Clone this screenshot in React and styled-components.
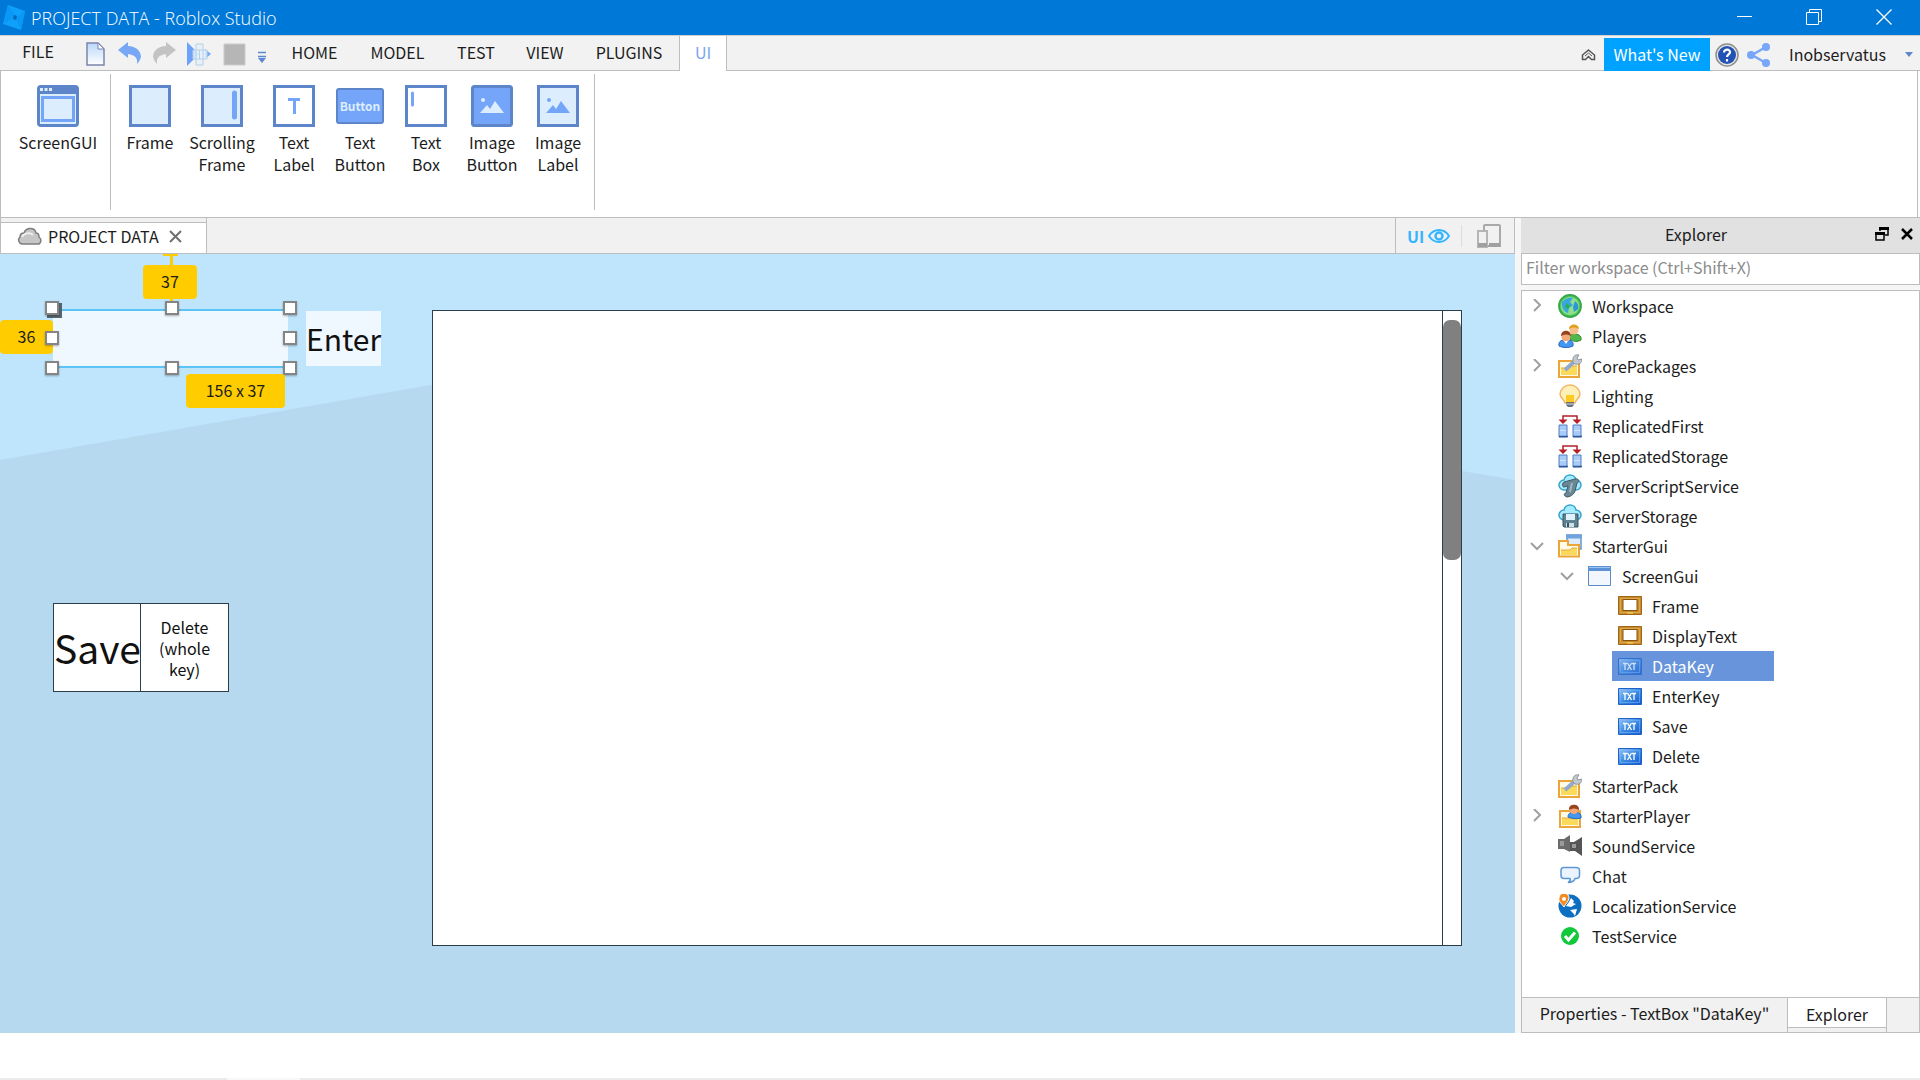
import React from 'react';
import styled, { createGlobalStyle, css } from 'styled-components';

const Global = createGlobalStyle`
  *, *::before, *::after { box-sizing: border-box; }
  body {
    margin: 0;
    background: #fff;
    color: #1c1c1c;
    font-family: 'Noto Sans CJK SC', 'Open Sans', sans-serif;
    font-size: 16px;
    line-height: 22px;
  }
  button, input { font: inherit; color: inherit; border: 0; background: none; padding: 0; margin: 0; }
  ul { list-style: none; margin: 0; padding: 0; }
  svg { display: block; flex: none; }
`;

const line = '#bdbdbd';

const Shell = styled.div`
  min-height: 100vh;
  display: flex;
  flex-direction: column;
`;

/* ---------- title bar ---------- */

const TitleBar = styled.header`
  height: 35px;
  flex: none;
  display: flex;
  align-items: center;
  justify-content: space-between;
  padding: 0 28px 0 3px;
  background: #0078d7;
  color: #fff;
`;

const Title = styled.h1`
  display: flex;
  align-items: center;
  gap: 6px;
  margin: 0;
  font: 300 18px/24px 'Open Sans', sans-serif;
`;

const WindowButtons = styled.div`
  display: flex;
  gap: 54px;
  padding-bottom: 2px;
`;

const IconButton = styled.button`
  display: flex;
  align-items: center;
  justify-content: center;
`;

/* ---------- menu ---------- */

const MenuBar = styled.nav`
  height: 36px;
  flex: none;
  display: flex;
  justify-content: space-between;
  background: #f2f2f2;
  border-top: 1px solid #cfcfcf;
  box-shadow: inset 0 -1px 0 ${line};
`;

const MenuGroup = styled.div`
  display: flex;
  align-items: stretch;
`;

const FileButton = styled.button`
  width: 76px;
  padding-bottom: 6px;
`;

const QuickTools = styled.div`
  display: flex;
  align-items: center;
  gap: 10px;
  padding: 0 7px 0 10px;
`;

const MenuTab = styled.button`
  width: ${(p) => p.$width}px;
  padding-bottom: 3px;
  ${(p) => p.$active && css`
    color: #7aa5f0;
    background: #fff;
    border: solid ${line};
    border-width: 0 1px;
  `}
`;

const Account = styled.div`
  display: flex;
  align-items: center;
  gap: 5px;
  padding: 2px 6px 0 0;
`;

const NewsButton = styled.button`
  align-self: stretch;
  width: 106px;
  margin-left: 3px;
  padding-bottom: 2px;
  background: #00a2ff;
  color: #fff;
`;

const ShareButton = styled(IconButton)`
  margin-left: 3px;
`;

const UserButton = styled.button`
  display: flex;
  align-items: center;
  gap: 18px;
  padding: 0 0 2px 13px;
`;

/* ---------- ribbon ---------- */

const Ribbon = styled.section`
  height: 146px;
  flex: none;
  display: flex;
  padding: 3px 0 7px;
  border: solid ${line};
  border-width: 0 1px;
  margin-right: 2px;
`;

const RibbonGroup = styled.div`
  display: flex;
  align-items: flex-start;
  padding: ${(p) => p.$pad};
  border-right: 1px solid ${line};
`;

const Tool = styled.button`
  width: ${(p) => p.$width}px;
  padding-top: 11px;
  display: flex;
  flex-direction: column;
  align-items: center;
  gap: 4px;
`;

const ToolLabel = styled.span`
  white-space: pre;
  text-align: center;
`;

/* ---------- work area ---------- */

const Work = styled.main`
  flex: 1;
  display: flex;
  gap: 6px;
  border-top: 1px solid ${line};
  background: #f6f6f6;
  margin-bottom: 45px;
`;

const Editor = styled.section`
  flex: 1;
  min-width: 0;
  display: flex;
  flex-direction: column;
`;

const DocBar = styled.div`
  height: 36px;
  flex: none;
  display: flex;
  justify-content: space-between;
  background: #f1f1f1;
  border-bottom: 1px solid ${line};
  border-right: 1px solid ${line};
`;

const DocTab = styled.div`
  display: flex;
  align-items: center;
  width: 207px;
  padding-left: 16px;
  background: #fff;
  border: solid ${line};
  border-width: 0 1px;
  box-shadow: inset 0 4px 0 #f1f1f1, inset 0 5px 0 ${line};
  white-space: nowrap;
  gap: 5px;
`;

const DocClose = styled(IconButton)`
  margin-left: 4px;
`;

const ViewTools = styled.div`
  display: flex;
  align-items: center;
  width: 119px;
  padding-left: 11px;
  border-left: 1px solid ${line};
`;

const UiToggle = styled.button`
  display: flex;
  align-items: center;
  gap: 4px;
  padding-right: 11px;
  border-right: 1px solid #dcdcdc;
  color: #35b5ff;
  font-weight: 700;
`;

const DeviceButton = styled(IconButton)`
  margin-left: 15px;
`;

const Canvas = styled.div`
  position: relative;
  flex: 1;
  overflow: hidden;
  background: #bee5fb;
`;

const Backdrop = styled.svg`
  width: 100%;
  height: 100%;
  position: absolute;
`;

const CanvasItem = styled.div`
  position: absolute;
  left: ${(p) => p.$x}px;
  top: ${(p) => p.$y}px;
  width: ${(p) => p.$w}px;
  height: ${(p) => p.$h}px;
`;

const KeyBox = styled(CanvasItem).attrs({ as: 'input' })`
  background: #eff7ff;
  border: solid #5cc3f5;
  border-width: 2px 0;
`;

const Handle = styled(CanvasItem)`
  background: #fff;
  border: 2px solid #858585;
  box-shadow: 0 1px 2px rgba(0, 0, 0, 0.3);
`;

const Anchor = styled(CanvasItem)`
  border: 4px dashed #56656f;
`;

const Badge = styled(CanvasItem)`
  display: flex;
  align-items: center;
  justify-content: center;
  padding-bottom: 2px;
  border-radius: 4px;
  background: #ffcc00;
`;

const Tick = styled(CanvasItem)`
  background: #ffcc00;
`;

const CanvasButton = styled(CanvasItem).attrs({ as: 'button' })`
  white-space: ${(p) => (p.$wrap ? 'normal' : 'nowrap')};
  background: ${(p) => p.$fill || '#fff'};
  border: ${(p) => (p.$fill ? 'none' : '1px solid #2c3e4a')};
  padding: ${(p) => (p.$wrap ? '2px 12px 0' : '0')};
  font-size: ${(p) => p.$size}px;
  line-height: ${(p) => p.$line}px;
  color: #111;
`;

const ScrollFrame = styled.div`
  position: absolute;
  left: 432px;
  right: 53px;
  top: 56px;
  height: 636px;
  display: flex;
  justify-content: flex-end;
  background: #fff;
  border: 1px solid #2c3e4a;
`;

const ScrollTrack = styled.div`
  width: 19px;
  padding-top: 9px;
  border-left: 1px solid #2c3e4a;
`;

const ScrollThumb = styled.div`
  height: 240px;
  border-radius: 7px;
  background: #808080;
`;

/* ---------- explorer ---------- */

const Panel = styled.aside`
  width: 399px;
  flex: none;
  display: flex;
  flex-direction: column;
`;

const PanelHead = styled.div`
  height: 35px;
  flex: none;
  display: flex;
  align-items: center;
  gap: 4px;
  padding: 0 6px 3px 0;
  background: #e1e1e1;
`;

const PanelTitle = styled.h2`
  flex: 1;
  margin: 0;
  font-size: 16px;
  font-weight: 400;
  text-align: center;
`;

const PanelButtons = styled.div`
  display: flex;
  gap: 11px;
`;

const Filter = styled.input`
  width: 100%;
  height: 32px;
  padding: 0 4px 5px;
  background: #fff;
  border: 1px solid ${line};
  &::placeholder { color: #8c8c8c; opacity: 1; }
`;

const TreeBox = styled.ul`
  flex: 1;
  margin-top: 5px;
  padding: 0;
  background: #fff;
  border: 1px solid ${line};
`;

const Row = styled.li`
  display: flex;
  align-items: center;
  height: 30px;
  padding-left: ${(p) => 5 + p.$depth * 30}px;
`;

const Toggle = styled(IconButton)`
  width: 20px;
  height: 20px;
`;

const RowLabel = styled.span`
  display: flex;
  align-items: center;
  align-self: stretch;
  gap: 10px;
  margin-left: 5px;
  padding: 0 10px 0 6px;
  ${(p) => p.$selected && css`
    width: 162px;
    background: #6794da;
    color: #fff;
  `}
`;

const PanelTabs = styled.div`
  height: 35px;
  flex: none;
  display: flex;
  background: #f1f1f1;
  border: solid ${line};
  border-width: 0 1px 1px;
`;

const PanelTab = styled.button`
  width: ${(p) => p.$width}px;
  padding-bottom: 4px;
  ${(p) => p.$active && css`
    padding-bottom: 2px;
    border: solid ${line};
    border-width: 0 1px;
    background: #fff;
    box-shadow: inset 0 -4px 0 #f1f1f1, inset 0 -5px 0 ${line};
  `}
`;

const StatusEdge = styled.footer`
  height: 2px;
  flex: none;
  background: linear-gradient(90deg, #ebebeb 227px, #f7f7f7 227px 300px, #ebebeb 300px);
`;

/* ---------- drawings ---------- */

const blue = '#5c86c9';
const sky = '#74a5f8';
const pale = '#dcedfe';

const Svg = ({ w = 24, h = 24, children, ...rest }) => (
  <svg width={w} height={h} viewBox={`0 0 ${w} ${h}`} fill="none" aria-hidden="true" {...rest}>{children}</svg>
);

const Box = ({ fill = pale, children }) => (
  <Svg w={42} h={42}><path d="M1.5 1.5h39v39h-39z" fill={fill} stroke={blue} strokeWidth="3" />{children}</Svg>
);

const Mountains = ({ fill }) => (
  <g fill={fill}><circle cx="12" cy="15" r="2" /><path d="M9 28l7-8 3 4 5-8 9 12z" /></g>
);

const toolIcons = {
  screen: (
    <Svg w={42} h={42}>
      <rect width="42" height="42" rx="4" fill={blue} />
      <path d="M3 9h36v30H3z" fill={pale} />
      <path d="M5.500 12.500h31v23h-31z" stroke={sky} strokeWidth="3" fill={pale} />
      <path d="M3 3h3v3H3zM7.500 3h3v3h-3zM12 3h3v3h-3z" fill={pale} />
    </Svg>
  ),
  frame: <Box />,
  scrolling: <Box><path d="M33.500 8v24" stroke={sky} strokeWidth="5" strokeLinecap="round" /></Box>,
  label: <Box fill="#fff"><path d="M15 14.500h12M21.500 14v15" stroke={sky} strokeWidth="3" /></Box>,
  box: <Box fill="#fff"><path d="M7.500 8v12" stroke={sky} strokeWidth="3" strokeLinecap="round" /></Box>,
  imageButton: (
    <Svg w={42} h={42}>
      <rect x="1.500" y="1.500" width="39" height="39" rx="2" fill={sky} stroke={blue} strokeWidth="3" />
      <Mountains fill={pale} />
    </Svg>
  ),
  imageLabel: <Box><Mountains fill={sky} /></Box>,
};

const ButtonIcon = styled.span`
  display: flex;
  align-items: center;
  justify-content: center;
  width: 48px;
  height: 36px;
  margin: 3px 0;
  border: 2px solid ${blue};
  border-radius: 3px;
  background: ${sky};
  color: ${pale};
  font: 700 12px/16px 'Noto Sans CJK SC', sans-serif;
`;

const Folder = ({ x = 0 }) => (
  <g>
    <path d={`M${1 + x} 7h20v16h-20z`} fill="#fffbe6" stroke="#eba538" strokeWidth="2" />
    <path d={`M${3 + x} 14h9l2-2h5v9h-16z`} fill="#fbd95a" />
    <path d={`M${3 + x} 14h9l2-2h5`} stroke="#e9a93f" />
  </g>
);

const Wrench = () => (
  <g>
    <path d="M7 16l10-9" stroke="#8fa9cf" strokeWidth="4" />
    <path d="M15 8c-1-5 2-8 6-7l-2 3 1 2 4-1c0 4-3 6-7 5z" fill="#c3c8ce" stroke="#8e949c" />
  </g>
);

const Replicated = () => (
  <Svg>
    <path d="M5 6V2h14v4" stroke="#b3202a" strokeWidth="1.500" />
    <path d="M0.500 5.500h9L5 10zM14.500 5.500h9L19 10z" fill="#b3202a" />
    <path d="M1 11h8v12H1zM15 11h8v12h-8z" fill="#a9cbf7" stroke="#537fc4" />
    <path d="M2.500 16.500h5M16.500 16.500h5" stroke="#fff" strokeDasharray="1 1" />
    <path d="M1 22.500h9M15 22.500h9" stroke="#33589a" strokeWidth="1.500" />
  </Svg>
);

const Cloud = () => (
  <path d="M12 1a6 6 0 0 1 6 5 5 5 0 0 1 0 10H6A5 5 0 0 1 6 6a6 6 0 0 1 6-5z" fill="#a6ebff" stroke="#35a5cb" strokeWidth="1.500" />
);

const Gold = () => (
  <Svg>
    <path d="M.500 2.500h23v18H.500z" fill="#c98a2b" stroke="#9f6518" />
    <path d="M2.500 4.500h19v14h-19z" stroke="#dda84c" />
    <path d="M5 5.500h14v11H5z" fill="#fff" stroke="#8a5510" />
    <path d="M9 19h6" stroke="#f7e06a" />
  </Svg>
);

const Txt = ({ selected }) => (
  <Svg opacity={selected ? 0.7 : 1}>
    <defs>
      <linearGradient id="txt" x1="0" y1="0" x2="1" y2="1">
        <stop stopColor="#9cc8f8" /><stop offset=".5" stopColor="#3b8be4" /><stop offset="1" stopColor="#1258cf" />
      </linearGradient>
    </defs>
    <path d="M.500 4.500h23v16H.500z" fill="url(#txt)" stroke="#1f62c8" />
    <path d="M2.500 6.500h19v12h-19z" stroke="#7db4f4" opacity=".6" />
    <path d="M5 9.500h4M7 9.500V16M9.500 9l4 7M13.500 9l-4 7M14 9.500h4M16 9.500V16" stroke="#fff" strokeWidth="1.300" />
  </Svg>
);

const treeIcons = {
  globe: (
    <Svg>
      <circle cx="12" cy="12" r="11" fill="#58c865" stroke="#37a848" strokeWidth="1.800" />
      <circle cx="12" cy="12" r="9" fill="#8fe08b" />
      <path d="M4 8c3-4 8-5 11-4l-3 4 3 3-4 3-1 5c-4-1-7-6-6-11z" fill="#37a7dd" />
      <path d="M17 7c3 2 4 5 3 8l-4 3-1-5z" fill="#2f95d8" />
      <path d="M9 9l3 3-2 3-3-2z" fill="#2cae55" />
    </Svg>
  ),
  players: (
    <Svg>
      <path d="M12 15c-1-5 3-5 5-5s7 1 6 6c-3 2-8 2-11-1z" fill="#51b84b" stroke="#2d8a34" />
      <circle cx="16" cy="6" r="4.500" fill="#f7bd86" /><path d="M11 5c0-6 10-6 10 0-4-2-7-2-10 0z" fill="#e3a01d" />
      <path d="M1 22c-1-6 4-6 7-6s8 0 7 6c-4 2-10 2-14 0z" fill="#4596ef" stroke="#2468c2" />
      <circle cx="8" cy="13" r="4.500" fill="#f3a97a" /><path d="M3 12c0-7 10-7 10 0-4-2-7-2-10 0z" fill="#96451d" />
      <path d="M6 17l2 3 2-3z" fill="#fff" />
    </Svg>
  ),
  package: <Svg><Folder /><Wrench /></Svg>,
  bulb: (
    <Svg>
      <path d="M12 1a10 10 0 0 1 10 9c0 4-4 5-5 9H7c-1-4-5-5-5-9a10 10 0 0 1 10-9z" fill="#fff0b8" stroke="#f3b562" strokeWidth="1.500" />
      <path d="M8 11h8v7H8z" fill="#fdcb22" /><path d="M8 18h8v3l-2 2h-4l-2-2z" fill="#69717b" />
      <path d="M8 20h8" stroke="#d8dde2" />
    </Svg>
  ),
  replicated: <Replicated />,
  script: (
    <Svg><Cloud /><path d="M6 8l11-3c4-1 5 3 2 4l-2 8c-1 4-6 6-8 6-4-1-3-4-1-4l2-7-4 1c-2 0-2-4 0-5z" fill="#6a8796" stroke="#3e5a69" /><path d="M14 9l-2 9" stroke="#9fb8c3" strokeWidth="2" /></Svg>
  ),
  storage: (
    <Svg><Cloud /><path d="M5 10h15v13H6l-1-1z" fill="#5f8292" stroke="#365361" /><path d="M8 10h9v6H8z" fill="#dff2f9" /><path d="M8 19h8v4H8z" fill="#cfe1e8" /><path d="M10 19v4" stroke="#365361" strokeWidth="2" /></Svg>
  ),
  starterGui: (
    <Svg>
      <path d="M9 1h14v14H9z" fill="#dcecfb" stroke="#6596cf" strokeWidth="1.500" /><path d="M8 .500h16v4H8z" fill="#6fa3dd" />
      <path d="M1 7h9v4h11v11.500H1z" fill="#fffbe6" stroke="#eba538" strokeWidth="2" />
      <path d="M3 16h9l2-2h5v7H3z" fill="#fbd95a" /><path d="M3 16h9l2-2h5" stroke="#e9a93f" />
    </Svg>
  ),
  window: (
    <Svg><path d="M.500 3v18.500h22V3z" fill="#f2f7fe" stroke="#5a8bc6" /><path d="M0 2h23v5H0z" fill="#5b93d6" /><path d="M1 3.500h21" stroke="#9fc4ee" /></Svg>
  ),
  gold: <Gold />,
  txt: <Txt />,
  txtSelected: <Txt selected />,
  starterPlayer: (
    <Svg>
      <Folder x={1} />
      <path d="M10 13c0-4 3-5 6-5s8 1 7 6c-4 1-9 1-13-1z" fill="#4596ef" stroke="#2468c2" />
      <circle cx="16" cy="6" r="4" fill="#f3a97a" /><path d="M11 6c-1-7 11-7 10 0-3-2-6-2-10 0z" fill="#96451d" />
    </Svg>
  ),
  sound: (
    <Svg>
      <path d="M0 5h6l6-4v17l-6-3H0z" fill="#6b6b6b" /><path d="M12 8h4l8-5v19l-7-5h-5z" fill="#555" />
      <path d="M2 7h4v5H2zM14 10h4v4h-4z" fill="#9a9a9a" />
    </Svg>
  ),
  chat: (
    <Svg><path d="M6 3.500h12c2 0 3.500 1 3.500 3v5c0 2-1.500 3-3.500 3h-1c0 2-3 4-7 4 2-1 3-2 2-4H6c-2 0-3-1-3-3v-5c0-2 1-3 3-3z" fill="#eaf3fe" stroke="#5f97d3" strokeWidth="1.500" /></Svg>
  ),
  localization: (
    <Svg>
      <circle cx="12" cy="12" r="11.500" fill="#0d6fc1" />
      <path d="M8 12l3-4 2-4 3 3-1 2 3 1-5 3zM12 16l7-1-2 7-2-3z" fill="#fff" />
      <path d="M6 13C3 9 0 7 1 4a5 5 0 0 1 10 0c0 3-3 5-5 9z" fill="#f58a1f" stroke="#fff" /><circle cx="6" cy="5" r="2" fill="#fff" />
    </Svg>
  ),
  test: (
    <Svg><circle cx="12" cy="12" r="9" fill="#11c93a" /><path d="M7 12l3.500 4L17 8.500" stroke="#fff" strokeWidth="3" /></Svg>
  ),
};

const Chevron = ({ open }) => (
  <Svg w={14} h={14}>
    <path d={open ? 'M1 4l6 6 6-6' : 'M4 0l6 6-6 6'} stroke="#a0a0a0" strokeWidth="2" />
  </Svg>
);

/* ---------- data ---------- */

const tabs = [['HOME', 79], ['MODEL', 87], ['TEST', 70], ['VIEW', 68], ['PLUGINS', 100], ['UI', 48, true]];

const tools = [
  ['Frame', toolIcons.frame, 72],
  ['Scrolling\nFrame', toolIcons.scrolling, 72],
  ['Text\nLabel', toolIcons.label, 72],
  ['Text\nButton', <ButtonIcon>Button</ButtonIcon>, 60],
  ['Text\nBox', toolIcons.box, 72],
  ['Image\nButton', toolIcons.imageButton, 60],
  ['Image\nLabel', toolIcons.imageLabel, 72],
];

const rows = [
  ['Workspace', 'globe', 0, 'closed'],
  ['Players', 'players', 0],
  ['CorePackages', 'package', 0, 'closed'],
  ['Lighting', 'bulb', 0],
  ['ReplicatedFirst', 'replicated', 0],
  ['ReplicatedStorage', 'replicated', 0],
  ['ServerScriptService', 'script', 0],
  ['ServerStorage', 'storage', 0],
  ['StarterGui', 'starterGui', 0, 'open'],
  ['ScreenGui', 'window', 1, 'open'],
  ['Frame', 'gold', 2],
  ['DisplayText', 'gold', 2],
  ['DataKey', 'txtSelected', 2],
  ['EnterKey', 'txt', 2],
  ['Save', 'txt', 2],
  ['Delete', 'txt', 2],
  ['StarterPack', 'package', 0],
  ['StarterPlayer', 'starterPlayer', 0, 'closed'],
  ['SoundService', 'sound', 0],
  ['Chat', 'chat', 0],
  ['LocalizationService', 'localization', 0],
  ['TestService', 'test', 0],
];

const handles = [45, 165, 283].flatMap((x) => [47, 77, 107].map((y) => [x, y])).filter(([x, y]) => x !== 165 || y !== 77);

export default function App() {
  return (
    <Shell>
      <Global />
      <TitleBar>
        <Title>
          <Svg w={22} h={28}>
            <path d="M5 1l17 6-4 19L0 20z" fill="#0fa0fb" />
            <path d="M5 1l8 11-13 8zM22 7l-10 7 6 12z" fill="#0a98f6" />
            <path d="M11 11l3 1-1 4-3-1z" fill="#0067b8" />
          </Svg>
          PROJECT DATA - Roblox Studio
        </Title>
        <WindowButtons>
          <IconButton aria-label="Minimize"><Svg w={15} h={15}><path d="M0 7.500h15" stroke="#fff" /></Svg></IconButton>
          <IconButton aria-label="Restore"><Svg w={16} h={16}><path d="M.500 3.500h12v12H.500zM3.500 3V.500h12v12H13" stroke="#fff" /></Svg></IconButton>
          <IconButton aria-label="Close"><Svg w={16} h={16}><path d="M.500 .500l15 15M15.500 .500l-15 15" stroke="#fff" strokeWidth="1.300" /></Svg></IconButton>
        </WindowButtons>
      </TitleBar>

      <MenuBar>
        <MenuGroup>
          <FileButton>FILE</FileButton>
          <QuickTools>
            <IconButton aria-label="New">
              <Svg w={22} h={24}>
                <defs><linearGradient id="page" x1="0" y1="0" x2="0" y2="1"><stop stopColor="#b9d8fa" /><stop offset="1" stopColor="#fff" /></linearGradient></defs>
                <path d="M1 1h11l6 6v16H1z" fill="url(#page)" stroke="#7d84ad" strokeWidth="1.500" /><path d="M12 1v6h6z" fill="#fff" stroke="#7d84ad" />
              </Svg>
            </IconButton>
            <IconButton aria-label="Undo"><Svg><path d="M0 8l10-8v4c8 0 13 5 13 11-1 3-2 5-4 7 1-6-2-9-9-10v4z" fill="#77a7f5" /></Svg></IconButton>
            <IconButton aria-label="Redo"><Svg><path d="M24 8L14 0v4C6 4 1 9 1 15c1 3 2 5 4 7-1-6 2-9 9-10v4z" fill="#c3c3c3" /></Svg></IconButton>
            <IconButton aria-label="Play">
              <Svg w={26} h={24}><path d="M1 0l12 12L1 24z" fill="#6da2fb" /><path d="M19 7l6 5-6 5z" fill="#77a9fb" /><path d="M10 2h7v6h4v9h-4v6h-7v-6H7V8h3z" fill="#e6f1fb" fillOpacity=".85" stroke="#b4d0e6" /><path d="M10 8h7v9h-7zM13.500 8v9" stroke="#b4d0e6" /></Svg>
            </IconButton>
            <IconButton aria-label="Stop"><Svg w={26} h={24}><path d="M2 2h21v21H2z" fill="#b6b6b6" stroke="#cbcbcb" /></Svg></IconButton>
            <IconButton aria-label="More"><Svg w={10} h={20}><path d="M0 8.500h8M0 12.500h8" stroke="#5d88cf" strokeWidth="1.500" /><path d="M0 14h8l-4 5z" fill="#5d88cf" /></Svg></IconButton>
          </QuickTools>
          {tabs.map(([t, w, active]) => <MenuTab key={t} $width={w} $active={active}>{t}</MenuTab>)}
        </MenuGroup>
        <Account>
          <IconButton aria-label="Collapse ribbon"><Svg w={15} h={12}><path d="M7.500 1l6 5v4.500h-3l-3-3-3 3h-3V6z" stroke="#555" strokeWidth="1.500" /><path d="M4 7l3.500-3L11 7" stroke="#555" /></Svg></IconButton>
          <NewsButton>What's New</NewsButton>
          <IconButton aria-label="Help">
            <Svg><circle cx="12" cy="12" r="11" fill="#e6e6e6" stroke="#8f8f8f" strokeWidth="1.500" /><circle cx="12" cy="12" r="9" fill="#2253b4" /><path d="M9 9.500c0-4 6.500-3.500 6 0-.5 2-3 2-3 4.500M12 16v2.500" stroke="#fff" strokeWidth="2.200" /></Svg>
          </IconButton>
          <ShareButton aria-label="Share"><Svg><path d="M19 4L5 12l14 8" stroke="#78a6f8" strokeWidth="2.500" /><circle cx="19" cy="4" r="4" fill="#78a6f8" /><circle cx="4" cy="12" r="4" fill="#78a6f8" /><circle cx="19" cy="20" r="4" fill="#78a6f8" /></Svg></ShareButton>
          <UserButton>Inobservatus<Svg w={10} h={6}><path d="M1 1h8L5 6z" fill="#5d88cf" /></Svg></UserButton>
        </Account>
      </MenuBar>

      <Ribbon>
        <RibbonGroup $pad="0 6px 0 11px"><Tool $width={92}>{toolIcons.screen}<ToolLabel>ScreenGUI</ToolLabel></Tool></RibbonGroup>
        <RibbonGroup $pad="0 0 0 3px">
          {tools.map(([name, icon, w]) => <Tool key={name} $width={w}>{icon}<ToolLabel>{name}</ToolLabel></Tool>)}
        </RibbonGroup>
      </Ribbon>

      <Work>
        <Editor>
          <DocBar>
            <DocTab>
              <Svg w={26} h={18}><path d="M5 17a4 4 0 0 1-2-7c0-3 2-4 4-4 2-6 11-6 12 0 2 0 3 1 3 4 3 2 2 6 0 7z" fill="#c6c6c6" stroke="#7d7d7d" strokeWidth="1.500" /><path d="M5 10c2-4 8-5 11-2" stroke="#efefef" strokeWidth="2" /></Svg>
              PROJECT DATA
              <DocClose aria-label="Close tab"><Svg w={14} h={14}><path d="M2 2l11 11M13 2L2 13" stroke="#707070" strokeWidth="2" /></Svg></DocClose>
            </DocTab>
            <ViewTools>
              <UiToggle>UI<Svg w={22} h={16}><path d="M1 8c5-8 15-8 20 0-5 8-15 8-20 0z" stroke="#35b5ff" strokeWidth="2" /><circle cx="11" cy="8" r="3.500" stroke="#35b5ff" strokeWidth="2.500" /></Svg></UiToggle>
              <DeviceButton aria-label="Device emulator"><Svg><path d="M7 6V2c0-1 0-1 1-1h14c1 0 1 0 1 1v20H11" stroke="#a9a9a9" strokeWidth="2" /><path d="M1 7h9v16H1z" stroke="#b5b5b5" strokeWidth="2" /><path d="M1 21h9M12 21h11" stroke="#a0a0a0" strokeWidth="4" /></Svg></DeviceButton>
            </ViewTools>
          </DocBar>
          <Canvas>
            <Backdrop viewBox="0 0 1515 779" preserveAspectRatio="none" aria-hidden="true"><path d="M0 206L690 86l825 140v553H0z" fill="#b6d9ef" /></Backdrop>
            <ScrollFrame><ScrollTrack><ScrollThumb /></ScrollTrack></ScrollFrame>
            <Tick $x={163} $y={0} $w={15} $h={2} />
            <Tick $x={170} $y={0} $w={3} $h={56} />
            <Badge $x={143} $y={11} $w={54} $h={34}>37</Badge>
            <Badge $x={0} $y={66} $w={53} $h={34}>36</Badge>
            <KeyBox aria-label="DataKey" $x={53} $y={55} $w={235} $h={59} />
            <Anchor $x={47} $y={49} $w={15} $h={15} />
            {handles.map(([x, y]) => <Handle key={`${x}-${y}`} $x={x} $y={y} $w={14} $h={14} />)}
            <Badge $x={186} $y={120} $w={99} $h={34}>156 x 37</Badge>
            <CanvasButton $x={306} $y={57} $w={75} $h={55} $fill="#eff7ff" $size={30} $line={55}>Enter</CanvasButton>
            <CanvasButton $x={53} $y={349} $w={88} $h={89} $size={39} $line={87}>Save</CanvasButton>
            <CanvasButton $x={140} $y={349} $w={89} $h={89} $size={16} $line={21} $wrap>Delete (whole key)</CanvasButton>
          </Canvas>
        </Editor>

        <Panel>
          <PanelHead>
            <PanelTitle>Explorer</PanelTitle>
            <PanelButtons>
              <IconButton aria-label="Undock"><Svg w={14} h={14}><path d="M5 4V1h8v7h-3" stroke="#000" strokeWidth="1.500" /><path d="M4 1.500h10M0 6.500h10" stroke="#000" strokeWidth="3" /><path d="M1 6h8v7H1z" stroke="#000" strokeWidth="1.500" /></Svg></IconButton>
              <IconButton aria-label="Close panel"><Svg w={14} h={14}><path d="M2 2l10 10M12 2L2 12" stroke="#000" strokeWidth="2.500" /></Svg></IconButton>
            </PanelButtons>
          </PanelHead>
          <Filter aria-label="Filter workspace" placeholder="Filter workspace (Ctrl+Shift+X)" />
          <TreeBox>
            {rows.map(([name, icon, depth, state]) => (
              <Row key={name + icon + depth} $depth={depth}>
                <Toggle as={state ? 'button' : 'span'} aria-label={state ? `Toggle ${name}` : undefined}>
                  {state && <Chevron open={state === 'open'} />}
                </Toggle>
                <RowLabel $selected={name === 'DataKey'}>{treeIcons[icon]}{name}</RowLabel>
              </Row>
            ))}
          </TreeBox>
          <PanelTabs>
            <PanelTab $width={265}>Properties - TextBox "DataKey"</PanelTab>
            <PanelTab $width={100} $active>Explorer</PanelTab>
          </PanelTabs>
        </Panel>
      </Work>
      <StatusEdge />
    </Shell>
  );
}
